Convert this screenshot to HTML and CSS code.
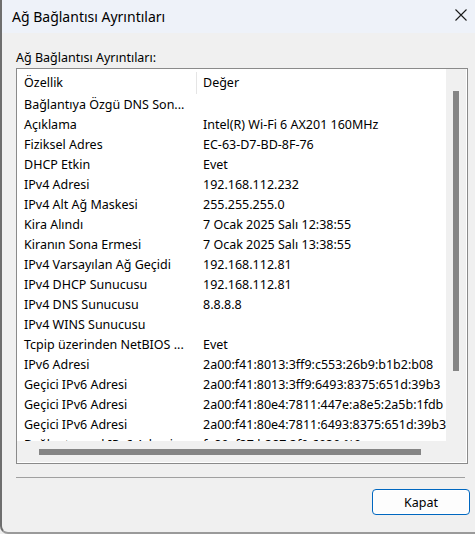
FILE: index.html
```html
<!DOCTYPE html>
<html lang="tr">
<head>
<meta charset="utf-8">
<title>Ağ Bağlantısı Ayrıntıları</title>
<link rel="stylesheet" href="styles.css">
</head>
<body>
<div class="window">
  <div class="titlebar">
    <span class="title">Ağ Bağlantısı Ayrıntıları</span>
    <svg class="close" width="12" height="12" viewBox="0 0 12 12"><path d="M0.5 0.5 L11.5 11.5 M11.5 0.5 L0.5 11.5" stroke="#1a1a1a" stroke-width="1.1" fill="none"/></svg>
  </div>
  <div class="content">
    <div class="label">Ağ Bağlantısı Ayrıntıları:</div>
    <div class="listbox">
      <div class="view">
        <div class="header">
          <div class="hcell c1">Özellik</div>
          <div class="hcell c2">Değer</div>
        </div>
        <div class="rows">
          <div class="row"><span class="c1">Bağlantıya Özgü DNS Son...</span><span class="c2"></span></div>
          <div class="row"><span class="c1">Açıklama</span><span class="c2">Intel(R) Wi-Fi 6 AX201 160MHz</span></div>
          <div class="row"><span class="c1">Fiziksel Adres</span><span class="c2">EC-63-D7-BD-8F-76</span></div>
          <div class="row"><span class="c1">DHCP Etkin</span><span class="c2">Evet</span></div>
          <div class="row"><span class="c1">IPv4 Adresi</span><span class="c2">192.168.112.232</span></div>
          <div class="row"><span class="c1">IPv4 Alt Ağ Maskesi</span><span class="c2">255.255.255.0</span></div>
          <div class="row"><span class="c1">Kira Alındı</span><span class="c2">7 Ocak 2025 Salı 12:38:55</span></div>
          <div class="row"><span class="c1">Kiranın Sona Ermesi</span><span class="c2">7 Ocak 2025 Salı 13:38:55</span></div>
          <div class="row"><span class="c1">IPv4 Varsayılan Ağ Geçidi</span><span class="c2">192.168.112.81</span></div>
          <div class="row"><span class="c1">IPv4 DHCP Sunucusu</span><span class="c2">192.168.112.81</span></div>
          <div class="row"><span class="c1">IPv4 DNS Sunucusu</span><span class="c2">8.8.8.8</span></div>
          <div class="row"><span class="c1">IPv4 WINS Sunucusu</span><span class="c2"></span></div>
          <div class="row"><span class="c1">Tcpip üzerinden NetBIOS ...</span><span class="c2">Evet</span></div>
          <div class="row"><span class="c1">IPv6 Adresi</span><span class="c2">2a00:f41:8013:3ff9:c553:26b9:b1b2:b08</span></div>
          <div class="row"><span class="c1">Geçici IPv6 Adresi</span><span class="c2">2a00:f41:8013:3ff9:6493:8375:651d:39b3</span></div>
          <div class="row"><span class="c1">Geçici IPv6 Adresi</span><span class="c2">2a00:f41:80e4:7811:447e:a8e5:2a5b:1fdb</span></div>
          <div class="row"><span class="c1">Geçici IPv6 Adresi</span><span class="c2">2a00:f41:80e4:7811:6493:8375:651d:39b3</span></div>
          <div class="row"><span class="c1">Bağlantı yerel IPv6 Adresi</span><span class="c2">fe80::f37:b387:3f9:6930:%9</span></div>
        </div>
      </div>
      <div class="vscroll"><div class="vthumb"></div></div>
      <div class="hscroll"><div class="hthumb"></div></div>
      <div class="corner"></div>
    </div>
    <div class="separator"></div>
    <div class="footer">
      <button class="btn">Kapat</button>
    </div>
  </div>
</div>
</body>
</html>
```
FILE: styles.css
```css
* { box-sizing: border-box; }
html, body {
  margin: 0;
  padding: 0;
  background: #f0f0f0;
}
body {
  font-family: "Noto Sans", "Liberation Sans", sans-serif;
  font-size: 12.5px;
  color: #000;
}
.window {
  width: 475px;
  height: 534px;
  background: #f0f0f0;
  border-left: 2px solid #6e6e6e;
  border-bottom: 2px solid #9a9a9a;
  border-bottom-left-radius: 8px;
  overflow: hidden;
}
.titlebar {
  height: 33px;
  background: #eef2f9;
  display: flex;
  align-items: center;
  justify-content: space-between;
  padding: 0 8px 0 10px;
}
.title {
  font-size: 14px;
  color: #000;
}
.close { display: block; margin-top: -3px; }
.content {
  padding: 16px 5px 0 14px;
}
.label {
  height: 19px;
  line-height: 17px;
}
.listbox {
  width: 452px;
  height: 396px;
  border: 1px solid #8a8a8a;
  background: #fff;
  display: grid;
  grid-template-columns: 429px 20px;
  grid-template-rows: 372px 21px;
  padding: 0 1px 1px 0;
}
.view {
  background: #fff;
  overflow: hidden;
}
.header {
  height: 26px;
  display: flex;
  align-items: center;
}
.hcell {
  height: 22px;
  line-height: 22px;
  margin-top: 1px;
}
.c1 {
  width: 180px;
  flex: none;
  padding-left: 7px;
  white-space: nowrap;
  overflow: hidden;
}
.hcell.c1 { border-right: 1px solid #e5e5e5; }
.c2 {
  padding-left: 6px;
  white-space: nowrap;
}
.row {
  height: 20px;
  line-height: 20px;
  display: flex;
}
.vscroll {
  background: #f0f0f0;
  padding-top: 22px;
  display: flex;
  justify-content: center;
}
.vthumb {
  width: 6px;
  height: 280px;
  background: #858585;
}
.hscroll {
  background: #f0f0f0;
  padding: 8px 0 0 22px;
}
.hthumb {
  width: 382px;
  height: 6px;
  background: #858585;
}
.corner { background: #f0f0f0; }
.separator {
  width: 449px;
  height: 1px;
  background: #a0a0a0;
  margin-top: 13px;
}
.footer {
  display: flex;
  justify-content: flex-end;
  padding: 11px 0 0 0;
}
.btn {
  width: 98px;
  height: 26px;
  font-family: inherit;
  font-size: 12.5px;
  color: #000;
  background: #fdfdfd;
  border: 1px solid #0067c0;
  border-radius: 4px;
  box-shadow: inset 0 0 0 1px #fff;
  padding: 0;
}
```
